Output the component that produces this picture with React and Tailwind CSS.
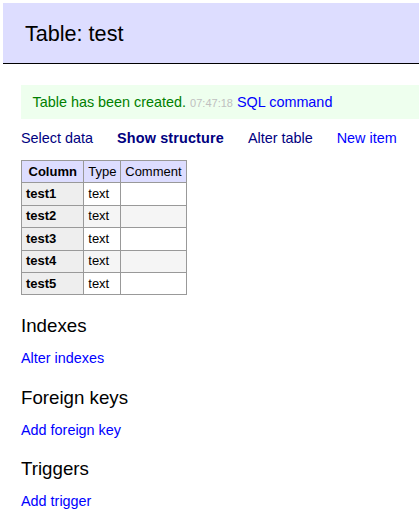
import React from 'react';

const rows = ['test1', 'test2', 'test3', 'test4', 'test5'];

function App() {
  return (
    <div className="min-h-screen bg-white text-black text-[14.4px] leading-[18px] pt-[3px] pl-[3px] overflow-hidden" style={{ fontFamily: '"Liberation Sans", Arial, sans-serif' }}>
      {/* Header */}
      <h2 className="bg-[#ddf] border-b border-black text-[21.6px] leading-[26px] font-normal pt-[18px] pb-[16px] px-[22px]">Table: test</h2>

      <div className="pl-[18px]">
        {/* Message */}
        <div className="mt-[21px] bg-[#efe] text-[#008000] py-[7.5px] px-[11.5px]">
          Table has been created.{' '}
          <span className="text-[11px] text-[#c0c0c0]">07:47:18</span>{' '}
          <a href="#" className="text-[#00f]">SQL command</a>
        </div>

        {/* Links */}
        <p className="mt-[10px] flex gap-[24px] whitespace-nowrap">
          <a href="#" className="text-[#000080]">Select data</a>
          <a href="#" className="text-[#000080] font-bold tracking-[0.15px]">Show structure</a>
          <a href="#" className="text-[#000080]">Alter table</a>
          <a href="#" className="text-[#00f]">New item</a>
        </p>

        {/* Structure table */}
        <table className="mt-[13px] border-t border-l border-[#999] text-[13px] leading-[16.2px]">
          <thead>
            <tr className="bg-[#ddf]">
              <th className="border-r border-b border-[#999] px-[6.5px] py-[2.6px] text-center font-bold">Column</th>
              <td className="border-r border-b border-[#999] px-[3.9px] py-[2.6px]">Type</td>
              <td className="border-r border-b border-[#999] px-[3.9px] py-[2.6px]">Comment</td>
            </tr>
          </thead>
          <tbody>
            {rows.map((r, i) => (
              <tr key={r} className={i % 2 === 1 ? 'bg-[#f5f5f5]' : 'bg-white'}>
                <th className="bg-[#eee] border-r border-b border-[#999] px-[3.9px] py-[2.6px] text-left font-bold">{r}</th>
                <td className="border-r border-b border-[#999] px-[3.9px] py-[2.6px]">text</td>
                <td className="border-r border-b border-[#999] px-[3.9px] py-[2.6px]"></td>
              </tr>
            ))}
          </tbody>
        </table>

        {/* Sections */}
        <h3 className="mt-[18.7px] text-[18.72px] leading-[23.4px] font-normal">Indexes</h3>
        <p className="mt-[11.5px]"><a href="#" className="text-[#00f]">Alter indexes</a></p>

        <h3 className="mt-[18.7px] text-[18.72px] leading-[23.4px] font-normal">Foreign keys</h3>
        <p className="mt-[11.5px]"><a href="#" className="text-[#00f]">Add foreign key</a></p>

        <h3 className="mt-[18.7px] text-[18.72px] leading-[23.4px] font-normal">Triggers</h3>
        <p className="mt-[11.5px]"><a href="#" className="text-[#00f]">Add trigger</a></p>
      </div>
    </div>
  );
}

export default App;
